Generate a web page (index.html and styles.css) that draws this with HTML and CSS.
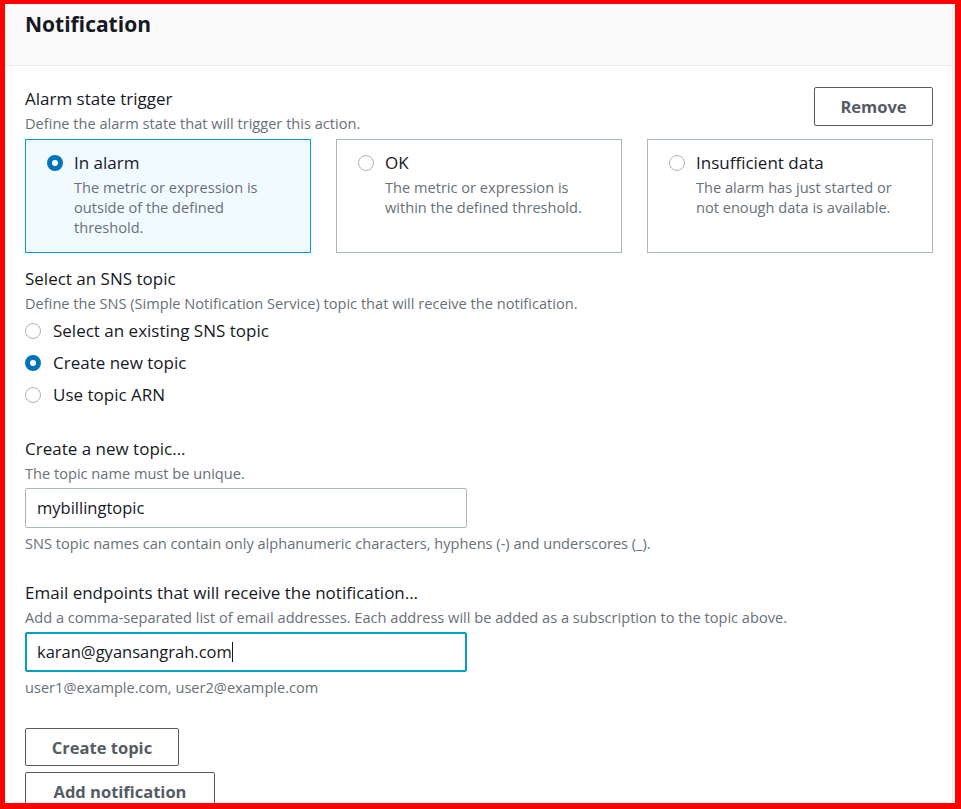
FILE: index.html
```html
<!DOCTYPE html>
<html lang="en">
<head>
<meta charset="utf-8">
<title>Notification</title>
<link rel="stylesheet" href="styles.css">
</head>
<body>
<div class="frame">
  <div class="container">
    <div class="header">
      <h2 class="title">Notification</h2>
    </div>
    <div class="content">
      <div class="trigger-head">
        <div class="field-head">
          <div class="label">Alarm state trigger</div>
          <div class="desc">Define the alarm state that will trigger this action.</div>
        </div>
        <button class="btn btn-remove">Remove</button>
      </div>
      <div class="tiles">
        <div class="tile selected">
          <span class="radio checked"></span>
          <div class="tile-text">
            <div class="tile-title">In alarm</div>
            <div class="desc">The metric or expression is outside of the defined threshold.</div>
          </div>
        </div>
        <div class="tile">
          <span class="radio"></span>
          <div class="tile-text">
            <div class="tile-title">OK</div>
            <div class="desc">The metric or expression is within the defined threshold.</div>
          </div>
        </div>
        <div class="tile">
          <span class="radio"></span>
          <div class="tile-text">
            <div class="tile-title">Insufficient data</div>
            <div class="desc">The alarm has just started or not enough data is available.</div>
          </div>
        </div>
      </div>

      <div class="field sns">
        <div class="label">Select an SNS topic</div>
        <div class="desc">Define the SNS (Simple Notification Service) topic that will receive the notification.</div>
        <div class="radio-list">
          <div class="radio-row"><span class="radio"></span><span>Select an existing SNS topic</span></div>
          <div class="radio-row"><span class="radio checked"></span><span>Create new topic</span></div>
          <div class="radio-row"><span class="radio"></span><span>Use topic ARN</span></div>
        </div>
      </div>

      <div class="field topic">
        <div class="label">Create a new topic…</div>
        <div class="desc">The topic name must be unique.</div>
        <div class="input">mybillingtopic</div>
        <div class="desc hint">SNS topic names can contain only alphanumeric characters, hyphens (-) and underscores (_).</div>
      </div>

      <div class="field email">
        <div class="label">Email endpoints that will receive the notification…</div>
        <div class="desc">Add a comma-separated list of email addresses. Each address will be added as a subscription to the topic above.</div>
        <div class="input focused">karan@gyansangrah.com<span class="caret"></span></div>
        <div class="desc hint">user1@example.com, user2@example.com</div>
      </div>

      <div class="actions">
        <button class="btn btn-create">Create topic</button>
        <button class="btn btn-add">Add notification</button>
      </div>
    </div>
  </div>
</div>
</body>
</html>
```

FILE: styles.css
```css
* { box-sizing: border-box; }
html, body { margin: 0; padding: 0; background: #ffffff; }
body {
  font-family: "Open Sans", "Noto Sans", Arial, sans-serif;
  color: #16191f;
}
.frame {
  width: 961px;
  height: 809px;
  border-style: solid;
  border-color: #ff0000;
  border-width: 4px 6px 6px 5px;
  overflow: hidden;
  background: #ffffff;
}
.container {
  margin-right: 2px;
  border-right: 1px solid #eaeded;
  height: 100%;
}
.header {
  height: 62px;
  background: #fafafa;
  border-bottom: 1px solid #eaeded;
  padding: 6px 20px 0 20px;
}
.title {
  margin: 0;
  font-size: 21px;
  line-height: 28px;
  font-weight: 700;
  color: #16191f;
}
.content {
  padding: 20px 19px 0 20px;
}
.label {
  font-size: 17px;
  line-height: 22px;
  color: #16191f;
}
.desc {
  font-size: 14.6px;
  line-height: 20px;
  color: #687078;
}
.label + .desc { margin-top: 3px; }
.trigger-head {
  display: flex;
  justify-content: space-between;
  align-items: flex-start;
}
.field-head { padding-top: 2px; }
.btn {
  font-family: inherit;
  font-size: 16.5px;
  font-weight: 700;
  color: #545b64;
  background: #ffffff;
  border: 1px solid #545b64;
  border-radius: 2px;
  height: 39px;
  padding: 0 26px;
  display: block;
  cursor: pointer;
}
.btn-remove { width: 119px; padding: 0; margin-top: 1px; }
.tiles {
  margin-top: 6px;
  display: grid;
  grid-template-columns: repeat(3, 286px);
  column-gap: 25px;
}
.tile {
  height: 114px;
  border: 1px solid #aab7b8;
  display: flex;
  align-items: flex-start;
  gap: 11px;
  padding: 12px 22px 0 21px;
}
.tile.selected {
  background: #f1faff;
  border-color: #00a1c9;
}
.tile-title {
  font-size: 17px;
  line-height: 22px;
  color: #16191f;
}
.tile-title + .desc { margin-top: 3px; }
.tile .radio { margin-top: 3px; }
.radio {
  flex: none;
  width: 16px;
  height: 16px;
  border-radius: 50%;
  border: 1.5px solid #aab7b8;
  background: #ffffff;
  display: inline-block;
}
.radio.checked {
  border: 5px solid #0073bb;
  background: #ffffff;
}
.field.sns { margin-top: 15px; }
.radio-list {
  margin-top: 7px;
  display: flex;
  flex-direction: column;
  gap: 10px;
}
.radio-row {
  display: flex;
  align-items: center;
  gap: 12px;
  font-size: 17px;
  line-height: 22px;
  color: #16191f;
}
.field.topic { margin-top: 32px; }
.field.email { margin-top: 29px; }
.input {
  margin-top: 5px;
  width: 442px;
  height: 40px;
  border: 1px solid #aab7b8;
  border-radius: 2px;
  padding: 0 11px;
  font-size: 16.5px;
  line-height: 38px;
  color: #16191f;
  background: #ffffff;
}
.input.focused {
  border: 2px solid #00a1c9;
  padding: 0 10px;
  line-height: 36px;
}
.caret {
  display: inline-block;
  width: 1px;
  height: 20px;
  background: #16191f;
  vertical-align: middle;
  margin-top: -3px;
}
.hint { margin-top: 5px; }
.actions {
  margin-top: 31px;
  display: flex;
  flex-direction: column;
  align-items: flex-start;
  gap: 6px;
}
.btn-create { width: 154px; height: 38px; padding: 0; }
.btn-add { width: 190px; height: 38px; padding: 0; }
```
